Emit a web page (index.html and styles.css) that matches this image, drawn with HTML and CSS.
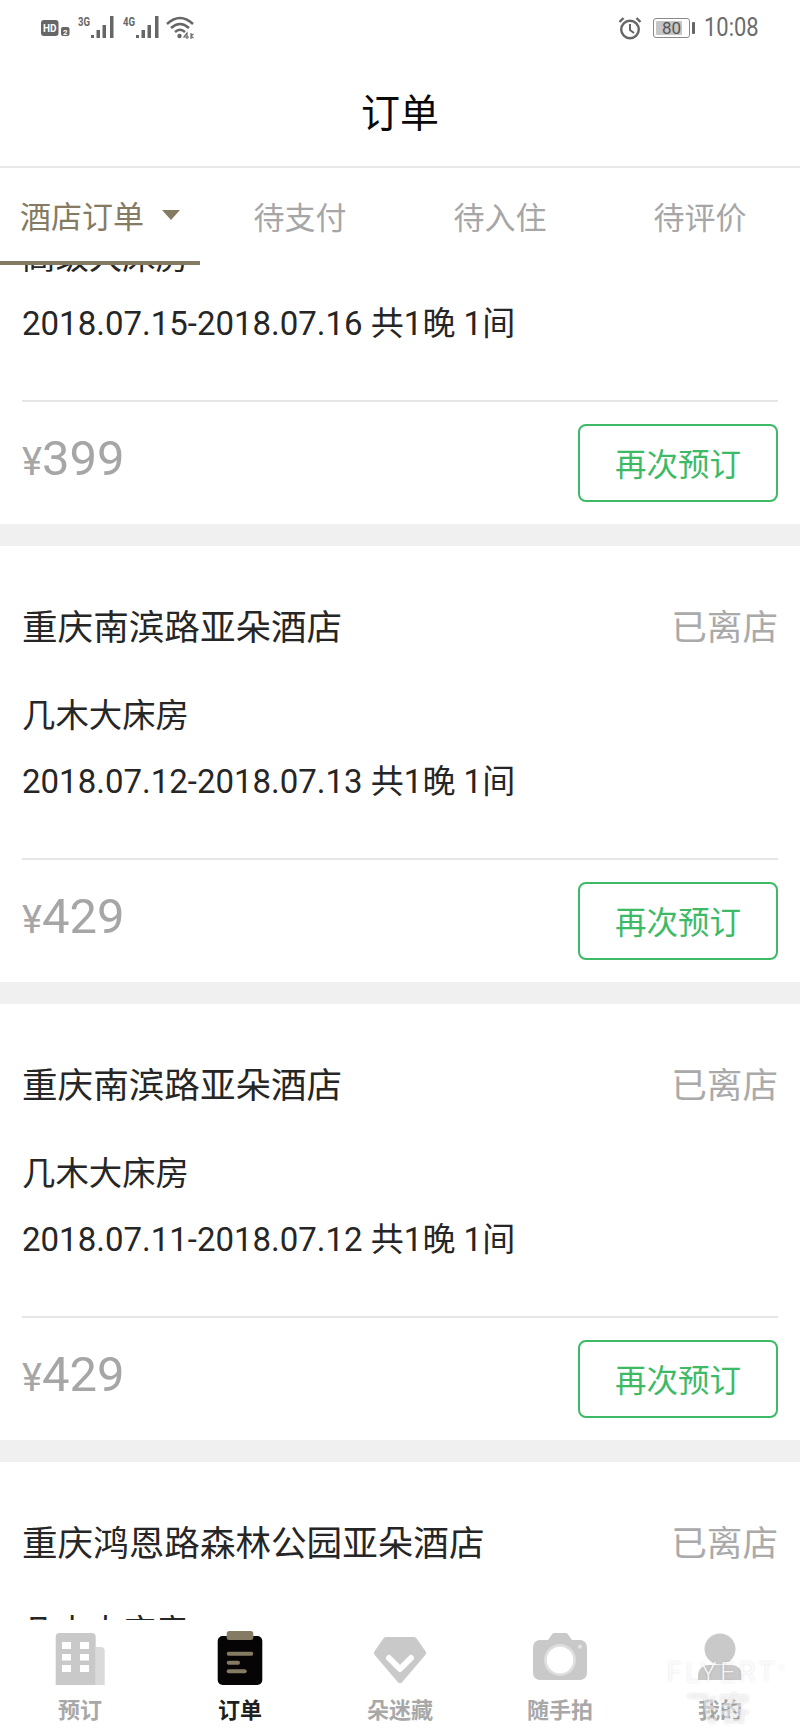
FILE: index.html
```html
<!DOCTYPE html>
<html lang="zh">
<head>
<meta charset="utf-8">
<title>订单</title>
<link rel="stylesheet" href="styles.css">
</head>
<body>
<div class="app">
  <div class="status">
    <div class="status-left">
      <svg width="156" height="26" viewBox="0 0 156 26">
        <rect x="1" y="6" width="17.500" height="16" rx="3" fill="#666"/>
        <text x="3" y="18" class="ic-txt" font-size="11" textLength="13.500" lengthAdjust="spacingAndGlyphs" fill="#fff">HD</text>
        <rect x="21" y="13" width="8.500" height="9" rx="2" fill="#666"/>
        <text x="23" y="20.500" class="ic-txt" font-size="8" fill="#fff">2</text>
        <text x="38" y="11.500" class="ic-txt" font-size="12" textLength="12" lengthAdjust="spacingAndGlyphs" fill="#666">3G</text>
        <g fill="#666"><rect x="51" y="21" width="3" height="3"/><rect x="56.500" y="16" width="3.500" height="8"/><rect x="62.500" y="11" width="3.500" height="13"/><rect x="70" y="2" width="3.500" height="22"/></g>
        <text x="83" y="11.500" class="ic-txt" font-size="12" textLength="12" lengthAdjust="spacingAndGlyphs" fill="#666">4G</text>
        <g fill="#666"><rect x="96" y="21" width="3" height="3"/><rect x="101.500" y="16" width="3.500" height="8"/><rect x="107.500" y="11" width="3.500" height="13"/><rect x="115" y="2" width="3.500" height="22"/></g>
        <g fill="none" stroke="#666" stroke-width="2.400"><path d="M127 10 Q140 -2 153 10"/><path d="M131 14 Q140 6 149 14"/><path d="M135 18 Q140 13.500 145 18"/></g>
        <circle cx="139.500" cy="22" r="2.200" fill="#666"/>
        <path d="M147 25v-6l-3 4h5M151 19v6M151 22l2.500 2M151 22l2.500-2" fill="none" stroke="#666" stroke-width="1.200"/>
      </svg>
    </div>
    <div class="status-right">
      <svg width="24" height="24" viewBox="0 0 24 24" fill="none" stroke="#666">
        <circle cx="12" cy="13.500" r="8.800" stroke-width="2.400"/>
        <path d="M12 8v6l4 3" stroke-width="2"/>
        <path d="M1.500 6l4-4M22.500 6l-4-4" stroke-width="2.400"/>
      </svg>
      <div class="battery"><span class="battery-fill"></span><span class="battery-num">80</span></div>
      <span class="battery-cap"></span>
      <span class="clock">10:08</span>
    </div>
  </div>
  <header class="title-bar">订单</header>
  <nav class="tabs">
    <div class="tab active">酒店订单<span class="caret"></span></div>
    <div class="tab">待支付</div>
    <div class="tab">待入住</div>
    <div class="tab">待评价</div>
  </nav>
  <main class="list">
    <section class="card first">
      <div class="row head"><span class="hotel">重庆南滨路亚朵酒店</span><span class="state">已离店</span></div>
      <div class="room">高级大床房</div>
      <div class="date">2018.07.15-2018.07.16 共1晚 1间</div>
      <div class="row foot"><span class="price"><span class="yen">¥</span>399</span><span class="btn">再次预订</span></div>
    </section>
    <section class="card">
      <div class="row head"><span class="hotel">重庆南滨路亚朵酒店</span><span class="state">已离店</span></div>
      <div class="room">几木大床房</div>
      <div class="date">2018.07.12-2018.07.13 共1晚 1间</div>
      <div class="row foot"><span class="price"><span class="yen">¥</span>429</span><span class="btn">再次预订</span></div>
    </section>
    <section class="card">
      <div class="row head"><span class="hotel">重庆南滨路亚朵酒店</span><span class="state">已离店</span></div>
      <div class="room">几木大床房</div>
      <div class="date">2018.07.11-2018.07.12 共1晚 1间</div>
      <div class="row foot"><span class="price"><span class="yen">¥</span>429</span><span class="btn">再次预订</span></div>
    </section>
    <section class="card">
      <div class="row head"><span class="hotel">重庆鸿恩路森林公园亚朵酒店</span><span class="state">已离店</span></div>
      <div class="room">几木大床房</div>
    </section>
  </main>
  <footer class="nav">
    <div class="nav-item">
      <svg width="50" height="54" viewBox="0 0 50 54">
        <path d="M40.700 16h5a4 4 0 0 1 4 4v34h-9z" fill="#dadada"/>
        <path d="M4.700 2h32a4 4 0 0 1 4 4v48H.7V6a4 4 0 0 1 4-4z" fill="#c9c9c9"/>
        <g fill="#fff"><rect x="7" y="11" width="9" height="7"/><rect x="25" y="11" width="9" height="7"/><rect x="7" y="23" width="9" height="6.500"/><rect x="25" y="23" width="9" height="6.500"/><rect x="7" y="34" width="9" height="7"/><rect x="25" y="34" width="9" height="7"/></g>
      </svg>
      <span>预订</span>
    </div>
    <div class="nav-item on">
      <svg width="46" height="54" viewBox="0 0 46 54">
        <rect x="0.700" y="5" width="44.600" height="49" rx="5" fill="#060404"/>
        <rect x="9.700" y="0" width="26.600" height="9" rx="2.500" fill="#857b63"/>
        <g fill="#857b63"><rect x="9.700" y="20.700" width="26.600" height="4" rx="2"/><rect x="9.700" y="29.700" width="13.300" height="4" rx="2"/><rect x="9.700" y="38.300" width="20" height="4" rx="2"/></g>
      </svg>
      <span>订单</span>
    </div>
    <div class="nav-item">
      <svg width="52" height="54" viewBox="0 0 52 54">
        <path d="M12 9h28l9 13-23 27L3 22z" fill="#c9c9c9" stroke="#c9c9c9" stroke-width="6" stroke-linejoin="round"/>
        <path d="M15 27l11 11 11-11" fill="none" stroke="#fff" stroke-width="6" stroke-linecap="round" stroke-linejoin="round"/>
      </svg>
      <span>朵迷藏</span>
    </div>
    <div class="nav-item">
      <svg width="54" height="54" viewBox="0 0 54 54">
        <path d="M7 9h8l3.500-5a4 4 0 0 1 3-2h11a4 4 0 0 1 3 2l3.500 5h8a7 7 0 0 1 7 7v26a7 7 0 0 1-7 7H7a7 7 0 0 1-7-7V16a7 7 0 0 1 7-7z" fill="#c9c9c9"/>
        <circle cx="27" cy="29" r="16" fill="#dedede"/>
        <circle cx="27" cy="29" r="13.300" fill="#fff"/>
        <circle cx="47" cy="15.700" r="2" fill="#e4e4e4"/>
      </svg>
      <span>随手拍</span>
    </div>
    <div class="nav-item">
      <svg width="46" height="54" viewBox="0 0 46 54">
        <circle cx="23" cy="18" r="15.500" fill="#c9c9c9"/>
        <path d="M11 34h24a10 10 0 0 1 10 10v5H1v-5a10 10 0 0 1 10-10z" fill="#c9c9c9"/>
      </svg>
      <span>我的</span>
    </div>
  </footer>
  <div class="mark"><div class="mark-en">FLYERT<sup>+</sup></div><div class="mark-cn">飞客</div></div>
</div>
</body>
</html>
```
FILE: styles.css
```css
* { box-sizing: border-box; }
html, body { margin: 0; padding: 0; background: #fff; }
body { font-family: "Noto Sans CJK SC", "Roboto", sans-serif; }
.app { position: relative; width: 800px; height: 1733px; display: flex; flex-direction: column; overflow: hidden; background: #fff; }

.status { height: 54px; flex: none; display: flex; justify-content: space-between; align-items: center; padding: 0 42px 0 40px; color: #666; }
.status-left, .status-right { display: flex; align-items: center; }
.status-left svg { display: block; }
.ic-txt { font-family: "Roboto", sans-serif; font-weight: 700; }
.status-right svg { margin-right: 11px; }
.status-right { padding-top: 2px; }
.battery { position: relative; width: 37px; height: 20px; border: 1px solid #8a8a8a; border-radius: 3px; display: flex; align-items: center; justify-content: center; padding: 1px; }
.battery-fill { position: absolute; left: 2px; top: 2px; bottom: 2px; width: 26px; background: #c6c6c6; border-radius: 1px; }
.battery-num { position: relative; font: 17px/1 "Roboto", sans-serif; color: #555; }
.battery-cap { width: 3px; height: 12px; margin: 0 9px 0 2px; background: #666; border-radius: 1px; }
.clock { width: 54px; white-space: nowrap; font: 25.500px/1 "Roboto", sans-serif; color: #6b6b6b; transform: scaleX(.86); transform-origin: left center; }

.title-bar { height: 114px; flex: none; display: flex; align-items: center; justify-content: center; border-bottom: 2px solid #e8e8e8; font-size: 39px; line-height: 1; color: #0a0a0a; }

.tabs { height: 97px; flex: none; display: flex; position: relative; z-index: 2; background: #fff; }
.tab { flex: 1; display: flex; align-items: center; justify-content: center; padding-bottom: 3px; font-size: 31px; line-height: 1; color: #a6a6a6; }
.tab.active { color: #857b63; border-bottom: 4px solid #857b63; padding-bottom: 0; }
.caret { width: 0; height: 0; margin-left: 18px; border-left: 9px solid transparent; border-right: 9px solid transparent; border-top: 10px solid #857b63; }

.list { flex: 1; min-height: 0; overflow: hidden; background: #f0f0f0; }
.card { background: #fff; padding: 0 22px; margin-bottom: 22px; height: 436px; }
.card.first { margin-top: -177px; }
.row { display: flex; justify-content: space-between; align-items: center; }
.head { padding-top: 52px; height: 106px; }
.hotel { font-size: 35.600px; line-height: 1; color: #262626; }
.state { font-size: 35.600px; line-height: 1; color: #aaa; }
.room { margin-top: 39px; font-size: 33.400px; line-height: 44px; color: #262626; }
.date { margin-top: 25px; font: 33px/44px "Roboto", "Noto Sans CJK SC", sans-serif; color: #262626; }
.foot { margin-top: 54px; height: 122px; border-top: 2px solid #e6e6e6; padding-top: 21px; padding-bottom: 20px; }
.price { padding-bottom: 8px; font: 49px/1 "Roboto", "Noto Sans CJK SC", sans-serif; color: #a6a6a6; }
.yen { font-size: 38px; }
.btn { width: 200px; height: 78px; border: 2px solid #3dba66; border-radius: 8px; display: flex; align-items: center; justify-content: center; font-size: 31.500px; line-height: 1; color: #3dba66; }

.nav { height: 113px; flex: none; display: flex; background: #fff; position: relative; z-index: 2; padding: 11px 0 0; }
.nav-item { flex: 1; display: flex; flex-direction: column; align-items: center; font-size: 22px; line-height: 1; font-weight: 700; color: #a8a8a8; }
.nav-item svg { display: block; height: 54px; margin-bottom: 12px; flex: none; }
.nav-item.on { color: #1f1f1f; }

.mark { position: absolute; z-index: 3; left: 667px; top: 1660px; width: 122px; color: rgba(255,255,255,.85); text-shadow: 0 0 3px rgba(0,0,0,.14); font-family: "Roboto", sans-serif; pointer-events: none; }
.mark-en { font-size: 27px; line-height: 26px; font-weight: 300; letter-spacing: 3.500px; white-space: nowrap; }
.mark-en sup { font-size: 13px; line-height: 0; }
.mark-cn { margin: 3px 0 0 19px; font-family: "Noto Sans CJK SC", sans-serif; font-size: 32px; line-height: 34px; font-weight: 700; color: rgba(255,255,255,.55); }
```
